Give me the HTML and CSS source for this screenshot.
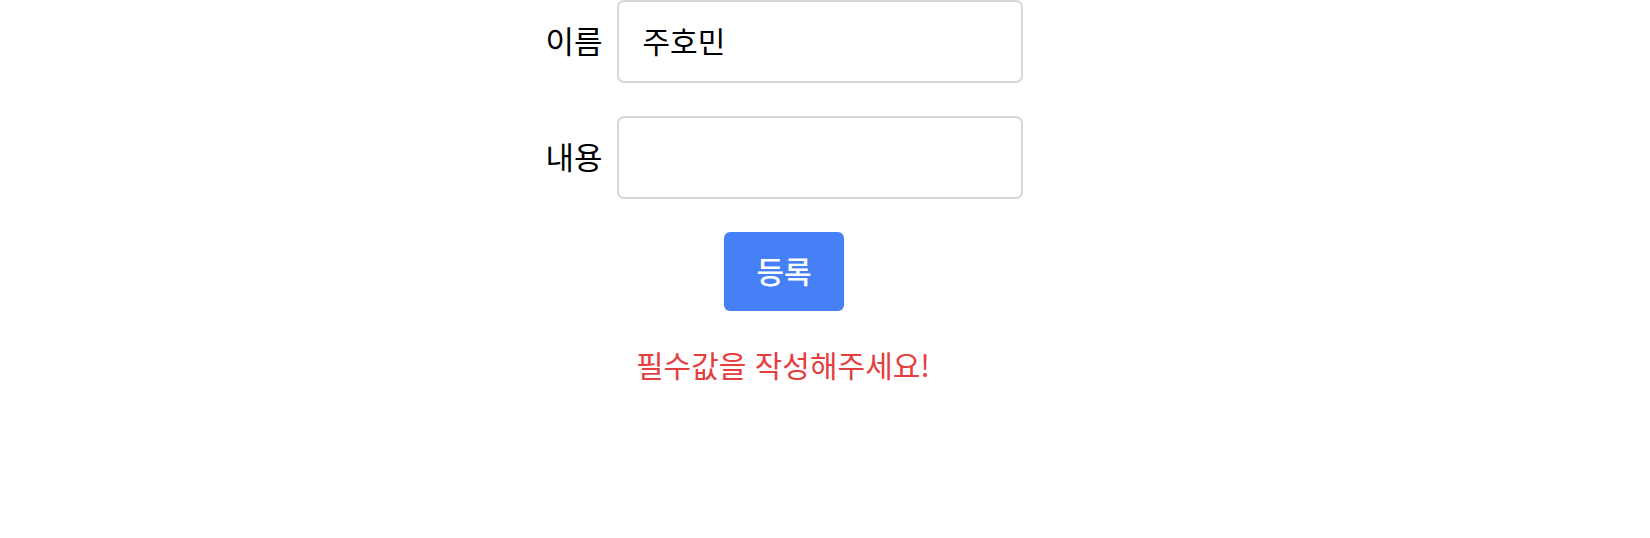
FILE: index.html
```html
<!DOCTYPE html>
<html lang="ko">
<head>
<meta charset="utf-8">
<title>등록</title>
<link rel="stylesheet" href="styles.css">
</head>
<body>
<main class="page">
  <form class="form" onsubmit="return false">
    <div class="row">
      <label class="label" for="name">이름</label>
      <input class="input" id="name" type="text" value="주호민">
    </div>
    <div class="row">
      <label class="label" for="content">내용</label>
      <input class="input" id="content" type="text" value="">
    </div>
    <button class="submit" type="submit">등록</button>
    <p class="error">필수값을 작성해주세요!</p>
  </form>
</main>
</body>
</html>
```

FILE: styles.css
```css
html, body {
  margin: 0;
  padding: 0;
  background: #ffffff;
}

body {
  font-family: "Noto Sans CJK KR", "Noto Sans", sans-serif;
  color: #000000;
}

.page {
  display: flex;
  justify-content: center;
  padding: 0 82px 0 0;
}

.form {
  display: flex;
  flex-direction: column;
  align-items: center;
  gap: 33px;
}

.row {
  display: flex;
  align-items: center;
  gap: 14px;
}

.label {
  font-size: 31px;
  line-height: 1;
  padding-bottom: 4px;
}

.input {
  box-sizing: border-box;
  width: 406px;
  height: 83px;
  padding: 0 24px 4px;
  border: 2px solid #d4d6db;
  border-radius: 7px;
  font-family: inherit;
  font-size: 30px;
  color: #000000;
  outline: none;
}

.submit {
  box-sizing: border-box;
  width: 120px;
  height: 79px;
  padding: 0 0 3px;
  border: none;
  border-radius: 6px;
  background: #4580f7;
  color: #ffffff;
  font-family: inherit;
  font-size: 30px;
  font-weight: 500;
  cursor: pointer;
}

.error {
  margin: -2px 2px 0 0;
  color: #e53e3e;
  font-size: 30px;
}
```
